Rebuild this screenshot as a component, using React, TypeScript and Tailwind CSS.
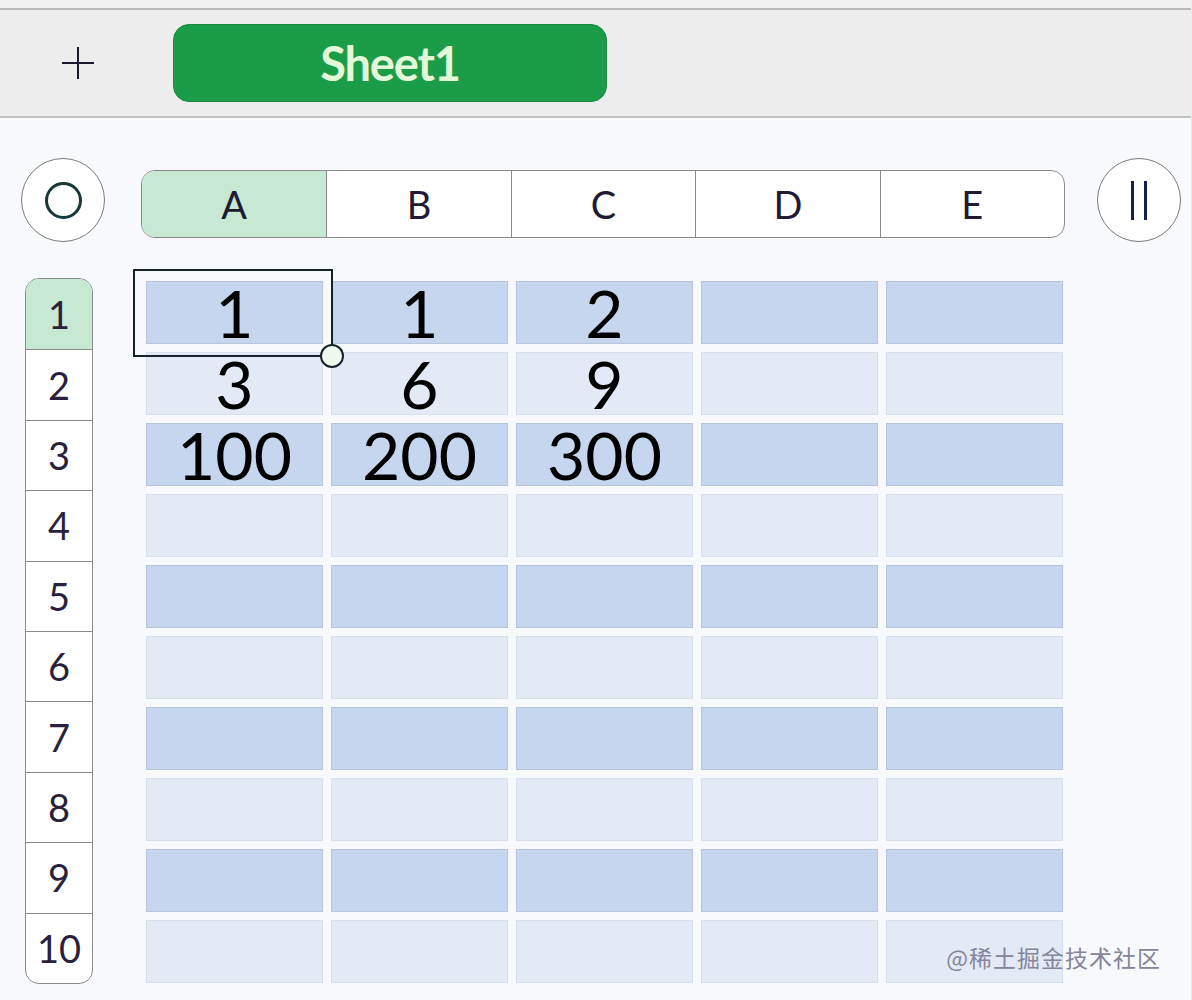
import React from "react";

const columns = ["A", "B", "C", "D", "E"];

const data: (string | null)[][] = [
  ["1", "1", "2", null, null],
  ["3", "6", "9", null, null],
  ["100", "200", "300", null, null],
  [null, null, null, null, null],
  [null, null, null, null, null],
  [null, null, null, null, null],
  [null, null, null, null, null],
  [null, null, null, null, null],
  [null, null, null, null, null],
  [null, null, null, null, null],
];

function PlusIcon() {
  return (
    <svg width="36" height="36" viewBox="0 0 36 36">
      <path d="M18 2v32M2 18h32" stroke="#1c1630" strokeWidth="2" />
    </svg>
  );
}

function RoundButton({ children }: { children: React.ReactNode }) {
  return (
    <div className="flex items-center justify-center w-[84px] h-[84px] rounded-full border-[1.5px] border-[#7a7a7a] bg-white">
      {children}
    </div>
  );
}

export default function App() {
  return (
    <div className="w-[1192px] h-[1000px] overflow-hidden bg-[#f7f9fc] flex flex-col font-['Lato',sans-serif] border-r border-[#e4f1e4]">
      <div className="h-[10px] bg-[#f1f1f1] border-b-2 border-[#b9b9b9]" />

      {/* sheet tabs */}
      <div className="h-[108px] bg-[#ededed] border-b-2 border-[#c2c2c2] flex items-center">
        <div className="w-[156px] flex justify-center">
          <PlusIcon />
        </div>
        <div className="ml-[17px] w-[434px] h-[78px] rounded-[16px] bg-[#1b9c48] border border-[#178a3e] flex items-center justify-center">
          <span className="text-[47px] leading-none font-bold text-[#e3f8d8] tracking-tight">Sheet1</span>
        </div>
      </div>

      {/* column headers */}
      <div className="flex items-start mt-[40px]">
        <div className="ml-[21px]">
          <RoundButton>
            <div className="w-[37px] h-[37px] rounded-full border-[3px] border-[#163838]" />
          </RoundButton>
        </div>
        <div className="ml-[36px] mt-[12px] w-[924px] h-[68px] grid grid-cols-5 rounded-[14px] border border-[#8a8a8a] bg-white overflow-hidden">
          {columns.map((c, i) => (
            <div
              key={c}
              className={
                "flex items-center justify-center text-[38px] text-[#211a33] " +
                (i === 0 ? "bg-[#c7e9d4]" : "border-l border-[#8a8a8a]")
              }
            >
              {c}
            </div>
          ))}
        </div>
        <div className="ml-[32px]">
          <RoundButton>
            <div className="flex gap-[10px]">
              <div className="w-[3px] h-[39px] bg-[#13204a]" />
              <div className="w-[3px] h-[39px] bg-[#13204a]" />
            </div>
          </RoundButton>
        </div>
      </div>

      {/* rows */}
      <div className="flex mt-[36px]">
        <div className="ml-[25px] w-[68px] flex flex-col rounded-[14px] border border-[#8a8a8a] bg-white overflow-hidden">
          {data.map((_, r) => (
            <div
              key={r}
              className={
                "h-[70.4px] flex items-center justify-center text-[38px] text-[#2a1f3d] " +
                (r === 0 ? "bg-[#c7e9d4]" : "border-t border-[#8a8a8a]")
              }
            >
              {r + 1}
            </div>
          ))}
        </div>

        <div className="relative ml-[53px] mt-[3px] self-start grid grid-cols-[repeat(5,177px)] auto-rows-[63px] gap-x-[8px] gap-y-[8px]">
          {data.map((row, r) =>
            row.map((v, c) => (
              <div
                key={r + "-" + c}
                className={
                  "flex items-center justify-center border text-[66px] leading-[54px] text-black " +
                  (r % 2 === 0
                    ? "bg-[#c6d6ee] border-[#b6c5dc]"
                    : "bg-[#e3eaf5] border-[#d6dfec]")
                }
              >
                {v}
              </div>
            ))
          )}

          {/* selection around A1 */}
          <div className="absolute left-[-13px] top-[-12px] w-[200px] h-[88px] border-[2.5px] border-[#16242a]">
            <div className="absolute right-[-13px] bottom-[-13px] w-[24px] h-[24px] rounded-full bg-[#eef8ee] border-[2.5px] border-[#16242a]" />
          </div>

          <div className="absolute right-[-98px] bottom-[14px] text-[23px] leading-none tracking-[1px] text-[#85849a] font-['Noto_Sans_CJK_SC',sans-serif] whitespace-nowrap">
            @稀土掘金技术社区
          </div>
        </div>
      </div>
    </div>
  );
}
